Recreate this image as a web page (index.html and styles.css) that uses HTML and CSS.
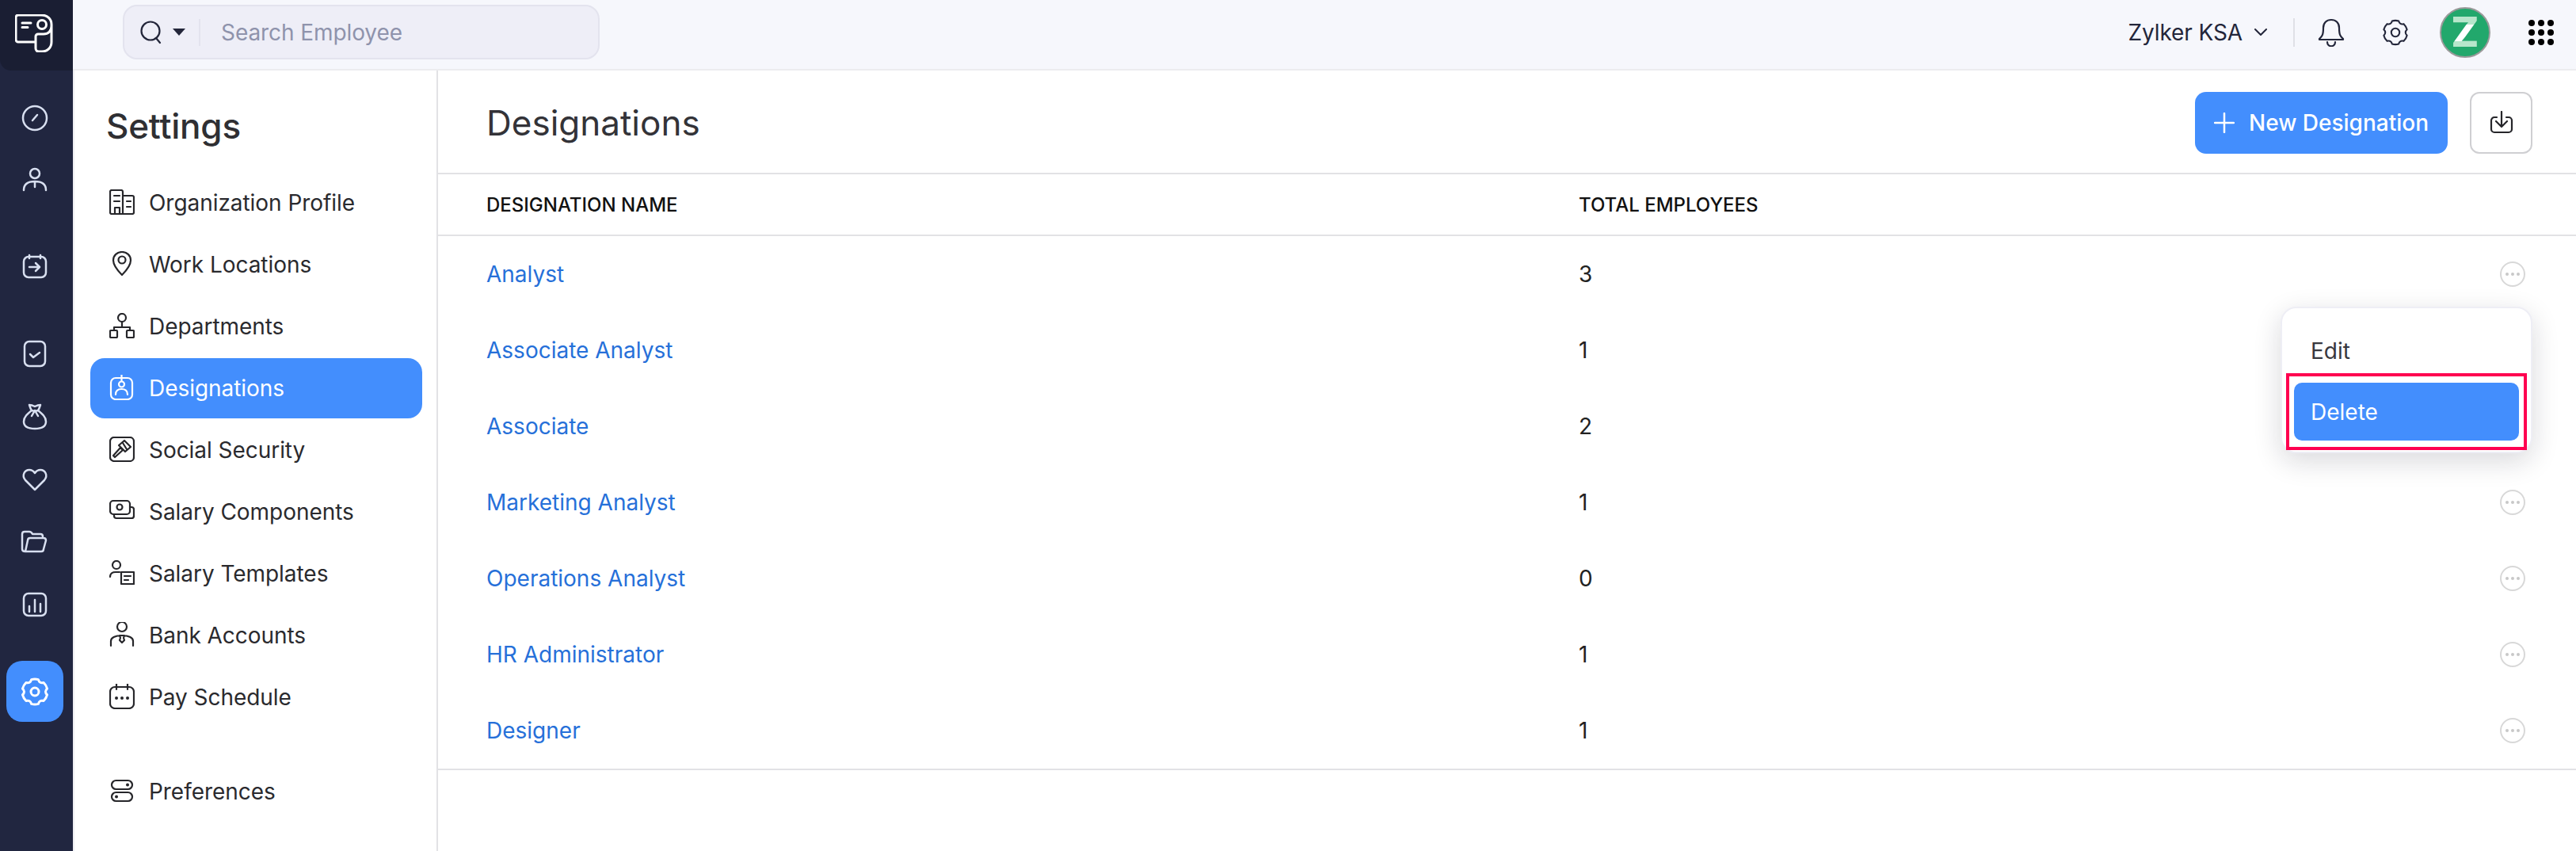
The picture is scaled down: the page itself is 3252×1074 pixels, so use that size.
FILE: index.html
```html
<!DOCTYPE html>
<html lang="en">
<head>
<meta charset="utf-8">
<title>Designations</title>
<link rel="stylesheet" href="styles.css">
</head>
<body>
<div class="app">
  <aside class="rail">
    <div class="rail-logo">
      <svg width="48" height="48" viewBox="0 0 48 48" class="logo"><path d="M26 35H4a3 3 0 0 1-3-3V4a3 3 0 0 1 3-3h29c8 0 13 5 13 12v22c0 7-5 12-12 12h-4a4 4 0 0 1-4-4V28a3 3 0 0 1 3-3h7c6 0 10-4 10-10"/><circle cx="34" cy="13" r="5.5"/><path d="M9 11h11M9 16.500h7"/></svg>
    </div>
    <div class="rail-body">
      <div class="rail-group rail-group-first">
        <div class="rail-item"><svg width="36" height="36" viewBox="0 0 36 36"><circle cx="18" cy="18" r="15"/><path d="M15 21l6-7"/></svg></div>
        <div class="rail-item"><svg width="36" height="36" viewBox="0 0 36 36"><circle cx="18" cy="10" r="6"/><path d="M4 31c0-7 5-11 14-11s14 4 14 11M18 21v6"/></svg></div>
      </div>
      <div class="rail-group">
        <div class="rail-item"><svg width="36" height="36" viewBox="0 0 36 36"><rect x="4" y="5" width="28" height="26" rx="6"/><path d="M11 3v4M25 3v4M11 18h13M19 13l5 5-5 5"/></svg></div>
      </div>
      <div class="rail-group">
        <div class="rail-item"><svg width="36" height="36" viewBox="0 0 36 36"><rect x="5" y="2" width="26" height="31" rx="6"/><path d="M12 18l4 4 8-6"/></svg></div>
        <div class="rail-item"><svg width="36" height="36" viewBox="0 0 36 36"><path d="M11 3c3 0 5 1 7 2 2-1 4-2 7-2-1 3-2 6-3 7 5 4 10 8 10 14 0 6-5 9-14 9S4 30 4 24c0-6 5-10 10-14-1-1-2-4-3-7zM14 10c3 1 5 1 8 0M18 10l-4 7M18 10l4 7"/></svg></div>
        <div class="rail-item"><svg width="36" height="36" viewBox="0 0 36 36"><path d="M18 31L6 19C1 13 5 6 11 6c3 0 5 1 7 4 2-3 4-4 7-4 6 0 10 7 5 13z"/></svg></div>
        <div class="rail-item"><svg width="36" height="36" viewBox="0 0 36 36"><path d="M6 30c-2 0-4-1-4-3V8c0-2 1-3 3-3h6c2 0 3 1 4 3h10c2 0 3 1 3 3v2M6 30h20c2 0 3-1 3-3l3-11c0-2-1-3-3-3H12c-2 0-3 1-3 3z"/></svg></div>
        <div class="rail-item"><svg width="36" height="36" viewBox="0 0 36 36"><rect x="4" y="4" width="28" height="28" rx="6"/><path d="M11 27v-7M18 27V12M25 27V17"/></svg></div>
      </div>
      <div class="rail-active"><svg width="36" height="36" viewBox="0 0 36 36"><path d="M13.600 2.600A16 16 0 0 1 22.400 2.600Q23.800 8 29.100 6.500A16 16 0 0 1 33.500 14.100Q29.500 18 33.500 21.900A16 16 0 0 1 29.100 29.500Q23.800 28 22.400 33.400A16 16 0 0 1 13.600 33.400Q12.300 28 6.900 29.500A16 16 0 0 1 2.500 21.900Q6.500 18 2.500 14.100A16 16 0 0 1 6.900 6.500Q12.300 8 13.600 2.600Z"/><circle cx="18" cy="18" r="5"/></svg></div>
    </div>
  </aside>

  <div class="content">
    <header class="topbar">
      <div class="search">
        <svg class="search-icon" width="30" height="30" viewBox="0 0 30 30"><circle cx="14" cy="13" r="11.500"/><path d="M21 22l5 6"/></svg>
        <span class="caret"></span>
        <span class="search-divider"></span>
        <span class="search-text">Search Employee</span>
      </div>
      <div class="top-right">
        <span class="org">Zylker KSA</span>
        <svg class="org-chevron" width="16" height="10" viewBox="0 0 16 10"><path d="M1 1l7 7 7-7"/></svg>
        <span class="top-divider"></span>
        <svg class="top-icon bell" width="36" height="36" viewBox="0 0 36 36"><path d="M3 26c3-3 5-4 5-14C8 6 12 2 18 2s10 4 10 10c0 10 2 11 5 14v1H3zM13 30c0 7 10 7 10 0"/></svg>
        <svg class="top-icon gear" width="34" height="36" viewBox="0 0 36 36"><path d="M13.600 2.600A16 16 0 0 1 22.400 2.600Q23.800 8 29.100 6.500A16 16 0 0 1 33.500 14.100Q29.500 18 33.500 21.900A16 16 0 0 1 29.100 29.500Q23.800 28 22.400 33.400A16 16 0 0 1 13.600 33.400Q12.300 28 6.900 29.500A16 16 0 0 1 2.500 21.900Q6.500 18 2.500 14.100A16 16 0 0 1 6.900 6.500Q12.300 8 13.600 2.600Z"/><circle cx="18" cy="18" r="5.500"/></svg>
        <div class="avatar"><span class="avatar-z">Z</span></div>
        <div class="dots"><i></i><i></i><i></i><i></i><i></i><i></i><i></i><i></i><i></i></div>
      </div>
    </header>

    <div class="workspace">
      <nav class="sidebar">
        <h2 class="sidebar-title">Settings</h2>
        <ul class="nav">
          <li class="nav-item"><svg width="32" height="32" viewBox="0 0 32 32"><path d="M17 31H3a2 2 0 0 1-2-2V3a2 2 0 0 1 2-2h12a2 2 0 0 1 2 2zM17 8h12a2 2 0 0 1 2 2v19a2 2 0 0 1-2 2H17M6 8h7M6 15h7M22 15h5M22 22h5M7 31v-8h6v8"/></svg>Organization Profile</li>
          <li class="nav-item"><svg width="32" height="32" viewBox="0 0 32 32"><path d="M16 30C11 25 5 18 5 11.500 5 5 10 1 16 1s11 4 11 10.500C27 18 21 25 16 30z"/><circle cx="16" cy="11" r="4.500"/></svg>Work Locations</li>
          <li class="nav-item"><svg width="32" height="32" viewBox="0 0 32 32"><circle cx="16" cy="6" r="5"/><path d="M16 11v7M6 22v-4h20v4"/><rect x="1" y="22" width="9" height="9" rx="1"/><rect x="22" y="22" width="9" height="9" rx="1"/></svg>Departments</li>
          <li class="nav-item nav-item-active"><svg width="32" height="32" viewBox="0 0 32 32"><rect x="2" y="4" width="27" height="27" rx="6"/><path d="M15.500 0v8M8 25c0-5 3-7 7.500-7s7.500 2 7.500 7"/><circle cx="15.500" cy="12" r="3.500"/></svg>Designations</li>
          <li class="nav-item"><svg width="32" height="32" viewBox="0 0 32 32"><rect x="1" y="1" width="30" height="30" rx="5"/><path d="M5 24l2 2 10-9-3-3zM12 11l7-6 8 8-7 6zM17 8l5 8"/></svg>Social Security</li>
          <li class="nav-item"><svg width="32" height="32" viewBox="0 0 32 32"><rect x="1" y="3" width="25" height="17" rx="4"/><circle cx="13" cy="11" r="3.500"/><path d="M26 11h2a3 3 0 0 1 3 3v8a3 3 0 0 1-3 3H9a3 3 0 0 1-3-3v-2"/></svg>Salary Components</li>
          <li class="nav-item"><svg width="32" height="32" viewBox="0 0 32 32"><circle cx="9" cy="6" r="5"/><path d="M1 21c0-4 2-6 7-6h5"/><rect x="15" y="15" width="16" height="15"/><path d="M19 20h8M19 25h5"/></svg>Salary Templates</li>
          <li class="nav-item"><svg width="32" height="32" viewBox="0 0 32 32"><circle cx="16" cy="6" r="6"/><path d="M2 30v-6c0-4 5-7 14-7s14 3 14 7v6M13 17h6l-1 3 1 3-3 3-3-3 1-3z"/></svg>Bank Accounts</li>
          <li class="nav-item nav-item-spaced"><svg width="32" height="32" viewBox="0 0 32 32"><rect x="1" y="4" width="30" height="27" rx="6"/><path d="M9 0v7M23 0v7"/><path class="dots-path" d="M9 18h.01M16 18h.01M23 18h.01"/></svg>Pay Schedule</li>
          <li class="nav-item"><svg width="32" height="32" viewBox="0 0 32 32"><rect x="3" y="3" width="26" height="11" rx="5.500"/><rect x="3" y="18" width="26" height="11" rx="5.500"/><path class="dots-path" d="M23 8.500h.01M9 23.500h.01"/></svg>Preferences</li>
        </ul>
      </nav>

      <main class="main">
        <div class="page-head">
          <h1 class="page-title">Designations</h1>
          <div class="page-actions">
            <button class="btn-primary"><svg width="26" height="26" viewBox="0 0 26 26"><path d="M13 1v24M1 13h24"/></svg>New Designation</button>
            <button class="btn-icon"><svg width="30" height="30" viewBox="0 0 30 30"><path d="M15 1v18M8 13l7 7 7-7M9 8H6a4 4 0 0 0-4 4v11a4 4 0 0 0 4 4h18a4 4 0 0 0 4-4V12a4 4 0 0 0-4-4h-3"/></svg></button>
          </div>
        </div>
        <div class="table">
          <div class="thead">
            <span>DESIGNATION NAME</span>
            <span>TOTAL EMPLOYEES</span>
          </div>
          <div class="row"><a class="link">Analyst</a><span>3</span><span class="more"><i></i><i></i><i></i></span></div>
          <div class="row"><a class="link">Associate Analyst</a><span>1</span><span class="more"><i></i><i></i><i></i></span>
            <div class="menu">
              <div class="menu-item">Edit</div>
              <div class="menu-item menu-item-active">Delete</div>
              <div class="callout"></div>
            </div>
          </div>
          <div class="row"><a class="link">Associate</a><span>2</span><span class="more"><i></i><i></i><i></i></span></div>
          <div class="row"><a class="link">Marketing Analyst</a><span>1</span><span class="more"><i></i><i></i><i></i></span></div>
          <div class="row"><a class="link">Operations Analyst</a><span>0</span><span class="more"><i></i><i></i><i></i></span></div>
          <div class="row"><a class="link">HR Administrator</a><span>1</span><span class="more"><i></i><i></i><i></i></span></div>
          <div class="row"><a class="link">Designer</a><span>1</span><span class="more"><i></i><i></i><i></i></span></div>
        </div>
      </main>
    </div>
  </div>
</div>
</body>
</html>
```
FILE: styles.css
```css
* { box-sizing: border-box; }
html, body { margin: 0; height: 100%; }
body {
  font-family: Inter, "Liberation Sans", sans-serif;
  color: #2a2a2e;
  background: #fff;
  overflow: hidden;
}
svg { display: block; fill: none; stroke-linecap: round; stroke-linejoin: round; flex: none; }
.app { display: flex; height: 1074px; }

/* Rail */
.rail { width: 92px; flex: none; background: #212640; display: flex; flex-direction: column; }
.rail-logo {
  height: 89px;
  background: #1a1e33;
  border-bottom-left-radius: 14px;
  display: flex;
  align-items: center;
  justify-content: center;
}
.logo { stroke: #fff; stroke-width: 3; margin: 0 6px 6px 0; }
.rail-body { padding-top: 21px; display: flex; flex-direction: column; gap: 31px; }
.rail-item { height: 79px; padding-right: 4px; display: flex; align-items: center; justify-content: center; }
.rail-group-first .rail-item { height: 78px; }
.rail-item svg { stroke: #d8dff0; stroke-width: 2.5; }
.rail-active {
  width: 72px;
  height: 77px;
  margin: 1px 0 0 8px;
  background: #438efd;
  border-radius: 20px;
  display: flex;
  align-items: center;
  justify-content: center;
}
.rail-active svg { stroke: #fff; stroke-width: 3; }

/* Top bar */
.content { flex: 1; min-width: 0; display: flex; flex-direction: column; }
.topbar {
  height: 89px;
  flex: none;
  background: #f6f7fc;
  border-bottom: 2px solid #ececef;
  padding: 0 28px 6px 63px;
  display: flex;
  align-items: center;
}
.search {
  width: 602px;
  height: 69px;
  background: #eeeef7;
  border: 2px solid #e3e3ee;
  border-radius: 18px;
  padding-left: 19px;
  display: flex;
  align-items: center;
}
.search-icon { stroke: #23263a; stroke-width: 2.200; }
.caret {
  margin-left: 12px;
  border-left: 8px solid transparent;
  border-right: 8px solid transparent;
  border-top: 9px solid #23263a;
}
.search-divider { width: 2px; height: 34px; margin-left: 17px; background: #e3e3ee; }
.search-text { margin-left: 26px; font-size: 28px; letter-spacing: -.08px; color: #8f93ac; }
.top-right { margin-left: auto; display: flex; align-items: center; }
.org { font-size: 28px; letter-spacing: -.1px; color: #23263a; }
.org-chevron { stroke: #23263a; stroke-width: 2; margin-left: 15px; }
.top-divider { width: 2px; height: 36px; background: #dfe0e6; margin-left: 33px; }
.top-icon { stroke: #23263a; stroke-width: 2.200; }
.bell { margin-left: 28px; }
.gear { margin-left: 46px; }
.avatar {
  width: 64px;
  height: 64px;
  margin-left: 39px;
  border-radius: 50%;
  background: #22a86c;
  border: 2px solid #9a9a9a;
  display: flex;
  align-items: center;
  justify-content: center;
}
.avatar-z {
  font-size: 52px;
  font-weight: 800;
  line-height: 1;
  color: transparent;
  background: linear-gradient(#b7e6cb 0 30%, #fff 30% 72%, #b7e6cb 72%);
  -webkit-background-clip: text;
  background-clip: text;
}
.dots { margin-left: 48px; width: 32px; display: grid; grid-template-columns: repeat(3, 8px); gap: 4px; }
.dots i { width: 8px; height: 8px; border-radius: 50%; background: #000; }

/* Sidebar */
.workspace { flex: 1; display: flex; min-height: 0; }
.sidebar {
  width: 461px;
  flex: none;
  border-left: 2px solid #eeeef2;
  border-right: 2px solid #e2e2e5;
  padding: 0 18px 0 20px;
}
.sidebar-title {
  height: 129px;
  margin: 0;
  padding: 42px 0 0 20px;
  font-size: 44px;
  line-height: 56px;
  font-weight: 500;
  letter-spacing: -.2px;
  color: #2f2f33;
}
.nav { list-style: none; margin: 0; padding: 0; display: flex; flex-direction: column; gap: 2px; }
.nav-item {
  height: 76px;
  padding-left: 24px;
  border-radius: 18px;
  display: flex;
  align-items: center;
  gap: 18px;
  font-size: 28px;
  letter-spacing: -.05px;
  color: #2a2a2e;
}
.nav-item svg { stroke: #26262a; stroke-width: 2.200; margin-top: -2px; }
.nav-item .dots-path { stroke-width: 4; }
.nav-item-active { background: #438efd; color: #fff; }
.nav-item-active svg { stroke: #fff; }
.nav-item-spaced { margin-bottom: 41px; }

/* Main */
.main { flex: 1; min-width: 0; }
.page-head {
  height: 131px;
  padding: 3px 55px 0 61px;
  border-bottom: 2px solid #e2e2e5;
  display: flex;
  align-items: center;
  justify-content: space-between;
}
.page-title { margin: 0; font-size: 44px; font-weight: 400; color: #333338; }
.page-actions { display: flex; gap: 28px; }
.btn-primary {
  width: 319px;
  height: 78px;
  border: 0;
  border-radius: 14px;
  background: #438efd;
  color: #fff;
  font: 500 28px Inter, "Liberation Sans", sans-serif;
  display: flex;
  align-items: center;
  justify-content: center;
  gap: 18px;
}
.btn-primary svg { stroke: #fff; stroke-width: 2.500; }
.btn-icon {
  width: 79px;
  height: 78px;
  background: #fff;
  border: 2px solid #cfcfd2;
  border-radius: 12px;
  display: flex;
  align-items: center;
  justify-content: center;
  padding: 0;
}
.btn-icon svg { stroke: #26262a; stroke-width: 2.200; }
.table { border-bottom: 2px solid #e2e2e5; }
.thead, .row {
  display: grid;
  grid-template-columns: 1379px 1fr 32px;
  align-items: center;
  padding: 0 64px 0 61px;
}
.thead {
  height: 78px;
  border-bottom: 2px solid #e2e2e5;
  font-size: 24px;
  font-weight: 500;
  color: #111;
}
.row { height: 96px; position: relative; font-size: 28px; color: #222; }
.link { color: #2670d9; }
.more {
  width: 32px;
  height: 32px;
  border: 2px solid #d8d8d8;
  border-radius: 50%;
  display: flex;
  align-items: center;
  justify-content: center;
  gap: 3px;
}
.more i { width: 4px; height: 4px; border-radius: 50%; background: #c8c8c8; }
.menu {
  position: absolute;
  z-index: 2;
  top: -7px;
  right: 55px;
  width: 318px;
  height: 185px;
  background: #fff;
  border: 2px solid #eeeef5;
  border-radius: 20px;
  box-shadow: 0 10px 34px rgba(20, 20, 40, .16);
  padding: 17px 15px 0;
  display: flex;
  flex-direction: column;
  gap: 4px;
  font-size: 28px;
}
.menu-item {
  height: 73px;
  flex: none;
  padding-left: 21px;
  border-radius: 10px;
  display: flex;
  align-items: center;
  color: #38383e;
}
.menu-item-active { background: #438efd; color: #fff; }
.callout {
  position: absolute;
  left: 5px;
  top: 82px;
  width: 304px;
  height: 97px;
  border: 4px solid #ff0050;
}
```
